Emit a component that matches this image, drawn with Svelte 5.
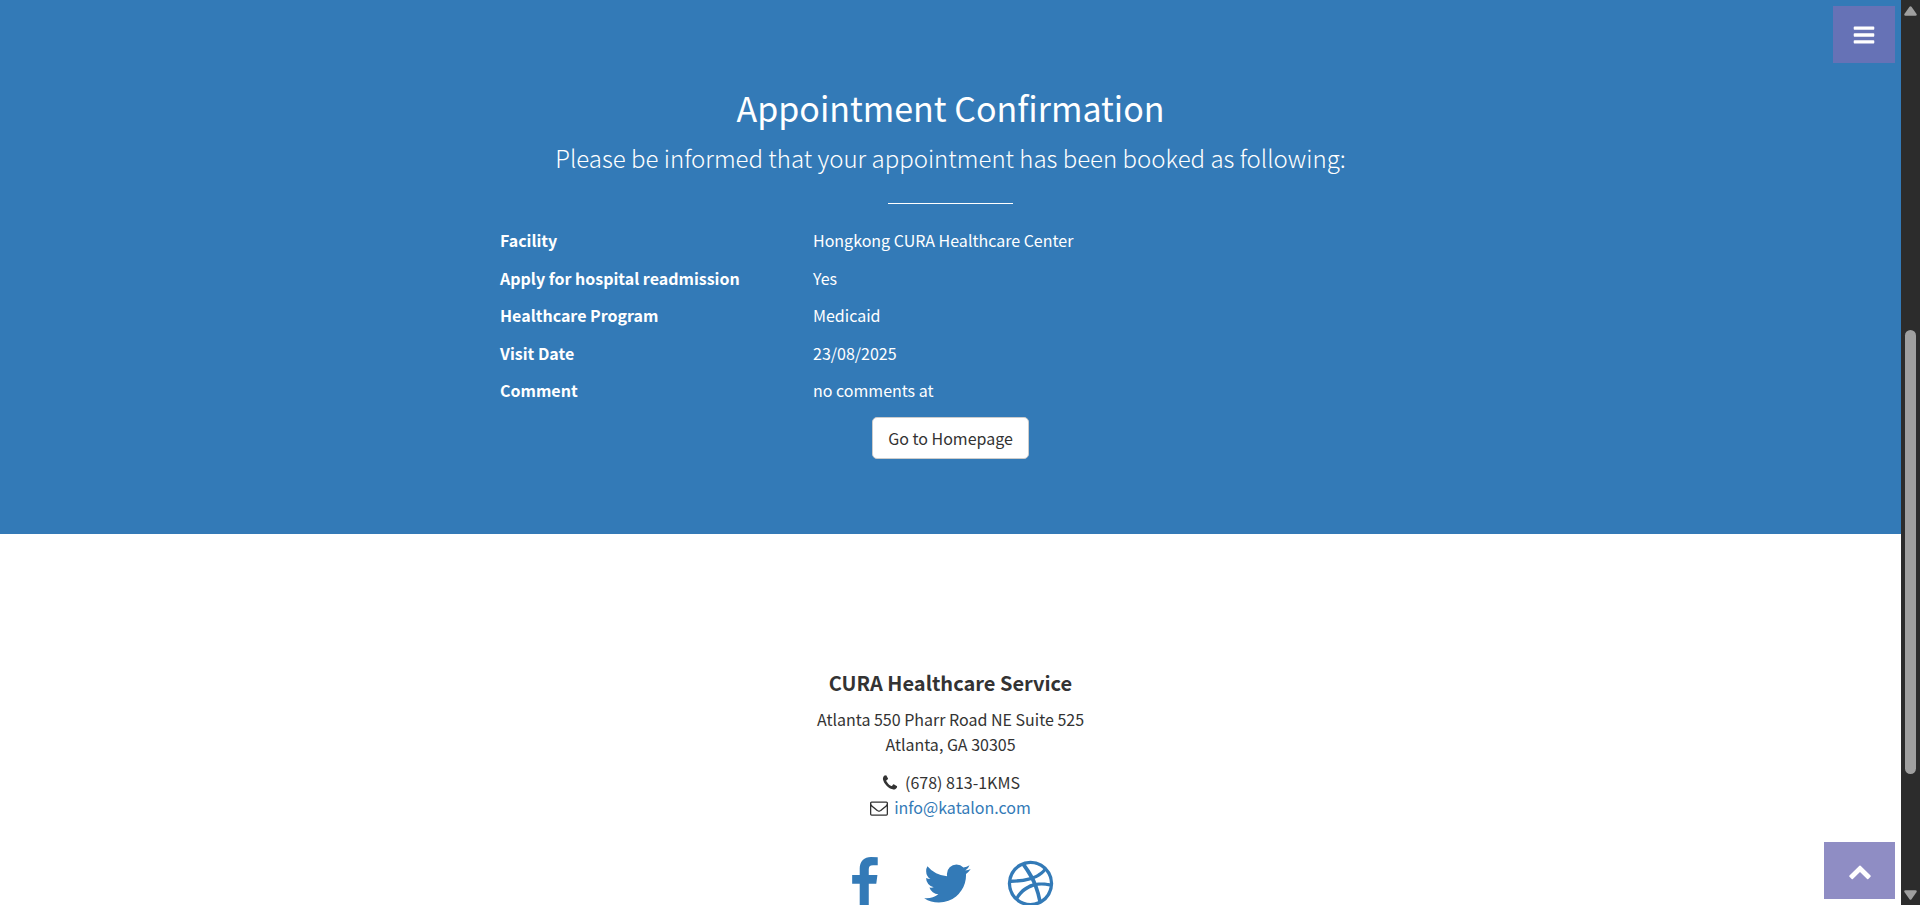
<script>
  const details = [
    { label: 'Facility', value: 'Hongkong CURA Healthcare Center' },
    { label: 'Apply for hospital readmission', value: 'Yes' },
    { label: 'Healthcare Program', value: 'Medicaid' },
    { label: 'Visit Date', value: '23/08/2025' },
    { label: 'Comment', value: 'no comments at' },
  ];

  const socials = [
    {
      name: 'Facebook',
      path: 'M1343 12v264h-157q-86 0-116 36t-30 108v189h293l-39 296h-254v759h-306v-759h-255v-296h255v-218q0-186 104-288.5t277-102.5q147 0 228 12z',
    },
    {
      name: 'Twitter',
      path: 'M1684 408q-67 98-162 167 1 14 1 42 0 130-38 259.5t-115.5 248.5-184.5 210.5-258 146-323 54.5q-271 0-496-145 35 4 78 4 225 0 401-138-105-2-188-64.5t-114-159.5q33 5 61 5 43 0 85-11-112-23-185.5-111.5t-73.5-205.5v-4q68 38 146 41-66-44-105-115t-39-154q0-88 44-163 121 149 294.5 238.5t371.5 99.5q-8-38-8-74 0-134 94.5-228.5t228.5-94.5q140 0 236 102 109-21 205-78-37 115-142 178 93-10 186-50z',
    },
    {
      name: 'Dribbble',
      path: 'M1152 1500q-42-241-140-498h-2l-2 1q-16 6-43 16.5t-101 49-137 82-131 114.5-103 148l-15-11q184 150 418 150 132 0 256-52zm-185-607q-21-49-53-111-311 93-673 93-1 7-1 21 0 124 44 236.5t124 201.5q50-89 123.5-166.5t142.5-124.5 130.5-81 99.5-48l37-13q4-1 13-3.5t13-4.5zm-107-212q-120-213-244-378-138 65-234 186t-128 272q302 0 606-80zm684 319q-210-60-409-29 87 239 128 469 111-75 185-189.5t96-250.5zm-805-741q-1 0-2 1 1-1 2-1zm590 145q-185-164-433-164-76 0-155 19 131 170 246 382 69-26 130-60.5t96.5-61.5 65.5-57 37.5-40.5zm223 485q-3-232-149-410l-1 1q-9 12-19 24.5t-43.5 44.5-71 60.5-100 65-131.5 64.5q25 53 44 95 2 5 6.5 17t7.5 17q36-5 74.5-7t73.5-2 69 1.5 64 4 56.5 5.5 48 6.5 36.5 6 25 4.5zm112 7q0 209-103 385.5t-279.5 279.5-385.5 103-385.5-103-279.5-279.5-103-385.5 103-385.5 279.5-279.5 385.5-103 385.5 103 279.5 279.5 103 385.5z',
    },
  ];
</script>

<div class="shell">
  <div class="page">
    <main class="confirmation">
      <h2>Appointment Confirmation</h2>
      <p class="lead">Please be informed that your appointment has been booked as following:</p>
      <hr />
      <dl>
        {#each details as item}
          <div class="row">
            <dt>{item.label}</dt>
            <dd>{item.value}</dd>
          </div>
        {/each}
      </dl>
      <a class="home" href="#home">Go to Homepage</a>
    </main>

    <footer>
      <h4>CURA Healthcare Service</h4>
      <address>Atlanta 550 Pharr Road NE Suite 525<br />Atlanta, GA 30305</address>
      <ul class="contact">
        <li>
          <svg class="phone" viewBox="0 0 1792 1792" aria-hidden="true"><path d="M1600 1240q0 27-10 70.5t-21 68.5q-21 50-122 106-94 51-186 51-27 0-52.5-3.5t-57.5-12.5-47.5-14.5-55.5-20.5-49-18q-98-35-175-83-128-79-264.5-215.5t-215.5-264.5q-48-77-83-175-3-9-18-49t-20.5-55.5-14.5-47.5-12.5-57.5-3.5-52.5q0-92 51-186 56-101 106-122 25-11 68.5-21t70.5-10q14 0 21 3 18 6 53 76 11 19 30 54t35 63.5 31 53.5q3 4 17.5 25t21.5 35.5 7 28.5q0 20-28.5 50t-62 55-62 53-28.5 46q0 9 5 22.5t8.5 20.5 14 24 11.5 19q76 137 174 235t235 174q2 1 19 11.5t24 14 20.5 8.5 22.5 5q18 0 46-28.5t53-62 55-62 50-28.5q14 0 28.5 7t35.5 21.5 25 17.5q25 15 53.5 31t63.5 35 54 30q70 35 76 53 3 7 3 21z" /></svg>
          <span>(678) 813-1KMS</span>
        </li>
        <li>
          <svg viewBox="0 0 1792 1792" aria-hidden="true"><path d="M1664 1504v-768q-32 36-69 66-268 206-426 338-51 43-83 67t-86.5 48.5-102.5 24.5h-2q-48 0-102.5-24.5t-86.5-48.5-83-67q-158-132-426-338-37-30-69-66v768q0 13 9.5 22.5t22.5 9.5h1472q13 0 22.5-9.5t9.5-22.5zm0-1051v-24.5l-.5-13-3-12.5-5.5-9-9-7.5-14-2.5h-1472q-13 0-22.5 9.5t-9.5 22.5q0 168 147 284 193 152 401 317 6 5 35 29.5t46 37.5 44.5 31.5 50.5 27.5 43 9h2q20 0 43-9t50.5-27.5 44.5-31.5 46-37.5 35-29.5q208-165 401-317 54-43 100.5-115.5t46.5-131.5zm128-37v1088q0 66-47 113t-113 47h-1472q-66 0-113-47t-47-113v-1088q0-66 47-113t113-47h1472q66 0 113 47t47 113z" /></svg>
          <a href="mailto:info@katalon.com">info@katalon.com</a>
        </li>
      </ul>
      <ul class="social">
        {#each socials as s}
          <li>
            <a href="#{s.name.toLowerCase()}" aria-label={s.name}>
              <svg viewBox="0 0 1792 1792" aria-hidden="true"><path d={s.path} /></svg>
            </a>
          </li>
        {/each}
      </ul>
    </footer>

    <button class="overlay menu" type="button" aria-label="Menu">
      <svg viewBox="0 0 1792 1792" aria-hidden="true"><path d="M1664 1344v128q0 26-19 45t-45 19h-1408q-26 0-45-19t-19-45v-128q0-26 19-45t45-19h1408q26 0 45 19t19 45zm0-512v128q0 26-19 45t-45 19h-1408q-26 0-45-19t-19-45v-128q0-26 19-45t45-19h1408q26 0 45 19t19 45zm0-512v128q0 26-19 45t-45 19h-1408q-26 0-45-19t-19-45v-128q0-26 19-45t45-19h1408q26 0 45 19t19 45z" /></svg>
    </button>
    <a class="overlay top" href="#top" aria-label="Back to top">
      <svg viewBox="0 0 1792 1792" aria-hidden="true"><path d="M1683 1331l-166 165q-19 19-45 19t-45-19l-531-531-531 531q-19 19-45 19t-45-19l-166-165q-19-19-19-45.500t19-45.500l742-741q19-19 45-19t45 19l742 741q19 19 19 45.500t-19 45.500z" /></svg>
    </a>
  </div>

  <div class="scrollbar" aria-hidden="true">
    <svg viewBox="0 0 13 10"><path d="M5.500 0.800Q6.500 -0.200 7.500 0.800L12.600 8Q13.200 9.800 11.500 9.800H1.500Q-0.200 9.800 0.400 8Z" /></svg>
    <div class="before"></div>
    <div class="thumb"></div>
    <div class="after"></div>
    <svg viewBox="0 0 13 10"><path d="M5.500 9.200Q6.500 10.200 7.500 9.200L12.600 2Q13.200 0.200 11.500 0.200H1.500Q-0.200 0.200 0.400 2Z" /></svg>
  </div>
</div>

<style>
  :global(body) {
    margin: 0;
    background: #fff;
  }

  .shell {
    display: flex;
    height: 100vh;
    overflow: hidden;
    font-family: 'Source Sans Pro', 'Noto Sans CJK SC', 'Noto Sans', sans-serif;
    font-size: 16px;
    line-height: 25px;
    color: #333;
  }

  .page {
    position: relative;
    flex: 1;
    min-width: 0;
    overflow: hidden;
  }

  .confirmation {
    display: flex;
    flex-direction: column;
    align-items: center;
    padding: 87px 24px 75px;
    background: #337ab7;
    color: #fff;
  }

  h2 {
    margin: 0;
    font-size: 34px;
    line-height: 42px;
    font-weight: 400;
    text-align: center;
  }

  .lead {
    margin: 11px 0 0;
    font-size: 24px;
    line-height: 36px;
    font-weight: 300;
    text-align: center;
  }

  hr {
    width: 125px;
    height: 1px;
    margin: 27px 0 24px;
    border: 0;
    background: #fff;
  }

  dl {
    display: grid;
    align-content: space-between;
    width: 100%;
    max-width: 901px;
    min-height: 175px;
    margin: 0;
  }

  .row {
    display: grid;
    grid-template-columns: 313px 1fr;
  }

  dt {
    font-weight: 700;
  }

  dd {
    margin: 0;
  }

  .home {
    margin-top: 14px;
    padding: 8px 15px;
    border: 1px solid #ccc;
    border-radius: 5px;
    background: #fff;
    color: #333;
    line-height: 24px;
    text-decoration: none;
  }

  footer {
    display: flex;
    flex-direction: column;
    align-items: center;
    padding: 136px 24px 64px;
    text-align: center;
  }

  h4 {
    margin: 0 0 12px;
    font-size: 20px;
    line-height: 25px;
    font-weight: 700;
  }

  address {
    font-style: normal;
  }

  ul {
    margin: 0;
    padding: 0;
    list-style: none;
  }

  .contact {
    margin-top: 13px;
  }

  .contact li {
    display: flex;
    align-items: center;
    justify-content: center;
    gap: 6px;
  }

  .contact svg {
    width: 18px;
    height: 18px;
    fill: currentColor;
  }

  footer a {
    color: #337ab7;
    text-decoration: none;
  }

  .social {
    display: flex;
    gap: 30px;
    margin-top: 37px;
    padding-right: 6px;
  }

  .social svg {
    display: block;
    width: 53px;
    height: 53px;
    fill: currentColor;
  }

  .overlay {
    position: absolute;
    right: 6px;
    display: flex;
    align-items: center;
    justify-content: center;
    height: 57px;
    padding: 0;
    border: 0;
    background: rgba(115, 112, 181, 0.8);
    color: #fff;
  }

  .overlay svg {
    width: 24px;
    height: 24px;
    fill: currentColor;
  }

  .menu {
    top: 6px;
    width: 62px;
  }

  .top {
    bottom: 6px;
    width: 71px;
  }

  .scrollbar {
    display: flex;
    flex-direction: column;
    align-items: center;
    box-sizing: border-box;
    width: 19px;
    padding: 6px 0 5px;
    background: #2c2c2c;
  }

  .scrollbar svg {
    width: 13px;
    height: 10px;
    fill: #9f9f9f;
  }

  .before {
    flex: 314;
  }

  .thumb {
    flex: 444;
    width: 11px;
    border-radius: 6px;
    background: #9f9f9f;
  }

  .after {
    flex: 116;
  }
</style>
